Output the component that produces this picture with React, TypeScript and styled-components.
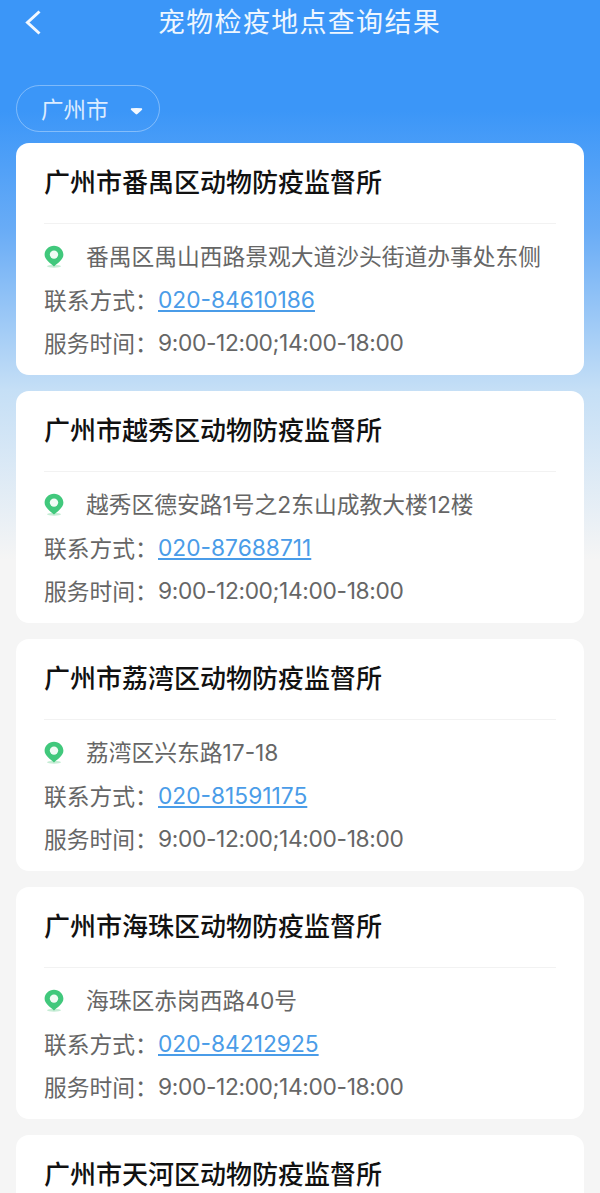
import React from "react";
import styled, { createGlobalStyle } from "styled-components";

const stations = [
  { name: "广州市番禺区动物防疫监督所", address: "番禺区禺山西路景观大道沙头街道办事处东侧", phone: "020-84610186" },
  { name: "广州市越秀区动物防疫监督所", address: "越秀区德安路1号之2东山成教大楼12楼", phone: "020-87688711" },
  { name: "广州市荔湾区动物防疫监督所", address: "荔湾区兴东路17-18", phone: "020-81591175" },
  { name: "广州市海珠区动物防疫监督所", address: "海珠区赤岗西路40号", phone: "020-84212925" },
  { name: "广州市天河区动物防疫监督所", address: "天河区", phone: "020-38868011" },
];

const GlobalStyle = createGlobalStyle`
  html, body {
    margin: 0;
    padding: 0;
    height: 1193px;
    overflow: hidden;
    background: #f5f5f5;
  }
`;

const Page = styled.div`
  width: 600px;
  height: 1193px;
  overflow: hidden;
  font-family: Inter, "Noto Sans CJK SC", "Noto Sans", sans-serif;
  background: linear-gradient(180deg, #3b96f8 0, #3b96f8 110px, #69acf6 230px, #c5dff6 390px, #f5f5f5 560px);
`;

const Header = styled.header`
  height: 40px;
  display: flex;
  align-items: center;
  justify-content: center;
  position: relative;
`;

const BackButton = styled.svg`
  position: absolute;
  left: 23px;
  top: 9px;
  width: 20px;
  height: 27px;
`;

const Title = styled.h1`
  margin: 0 0 0 -1px;
  font-size: 27px;
  font-weight: 400;
  letter-spacing: 1.3px;
  color: #eef6ff;
`;

const FilterRow = styled.div`
  padding: 45px 16px 0;
  height: 58px;
`;

const CityFilter = styled.div`
  box-sizing: border-box;
  width: 144px;
  height: 47px;
  border: 1px solid rgba(255, 255, 255, 0.35);
  border-radius: 24px;
  display: flex;
  align-items: center;
  padding: 0 16px 2px 24px;
  justify-content: space-between;
  color: #dcecff;
  font-size: 22.5px;
`;

const Caret = styled.svg`
  width: 13px;
  height: 8px;
  margin-top: 6px;
`;

const CardList = styled.main`
  padding: 0 16px;
  display: flex;
  flex-direction: column;
  gap: 16px;
`;

const Card = styled.section`
  box-sizing: border-box;
  height: 232px;
  flex: none;
  background: #fff;
  border-radius: 13px;
  padding: 0 28px;
`;

const CardTitle = styled.h2`
  margin: 0;
  height: 80px;
  line-height: 80px;
  font-size: 26px;
  font-weight: 500;
  color: #111;
  border-bottom: 1px solid #f2f2f2;
`;

const Row = styled.div`
  display: flex;
  align-items: center;
  height: 43px;
  font-size: 22.75px;
  color: #666;
  white-space: nowrap;
`;

const AddressRow = styled(Row)`
  margin: 10px 0 1px;
`;

const Pin = styled.svg`
  width: 20px;
  height: 23px;
  margin: 2px 22px 0 0;
  flex: none;
`;

const Label = styled.span`
  width: 114px;
  flex: none;
`;

const Phone = styled.a`
  color: #4a9ce8;
  text-decoration: underline;
  text-decoration-thickness: 1.5px;
  text-underline-offset: 2px;
`;

const Hours = styled.span`
  letter-spacing: -0.36px;
`;

export default function App() {
  return (
    <Page>
      <GlobalStyle />
      <Header>
        <BackButton viewBox="0 0 20 27" fill="none">
          <path d="M16.5 2.5 L4.5 13.5 L16.5 24.5" stroke="#f2f8ff" strokeWidth="3" />
        </BackButton>
        <Title>宠物检疫地点查询结果</Title>
      </Header>
      <FilterRow>
        <CityFilter>
          广州市
          <Caret viewBox="0 0 14 9">
            <path d="M1 1.5 Q7 .5 13 1.5 Q14 2.5 13 3.5 L8 8 Q7 8.8 6 8 L1 3.5 Q0 2.5 1 1.5Z" fill="#f4f9ff" />
          </Caret>
        </CityFilter>
      </FilterRow>
      <CardList>
        {stations.map((s) => (
          <Card key={s.name}>
            <CardTitle>{s.name}</CardTitle>
            <AddressRow>
              <Pin viewBox="0 0 20 23">
                <ellipse cx="10" cy="21.2" rx="7" ry="1.5" fill="#c6ecd5" />
                <path d="M10 .8 C4.8 .8 .6 4.8 .6 9.8 C.6 14.2 6 18.2 10 21.4 C14 18.2 19.4 14.2 19.4 9.8 C19.4 4.8 15.2 .8 10 .8Z" fill="#41c87c" />
                <circle cx="10" cy="9.6" r="4.2" fill="#f1fbf5" />
              </Pin>
              {s.address}
            </AddressRow>
            <Row>
              <Label>联系方式：</Label>
              <Phone>{s.phone}</Phone>
            </Row>
            <Row>
              <Label>服务时间：</Label>
              <Hours>9:00-12:00;14:00-18:00</Hours>
            </Row>
          </Card>
        ))}
      </CardList>
    </Page>
  );
}
